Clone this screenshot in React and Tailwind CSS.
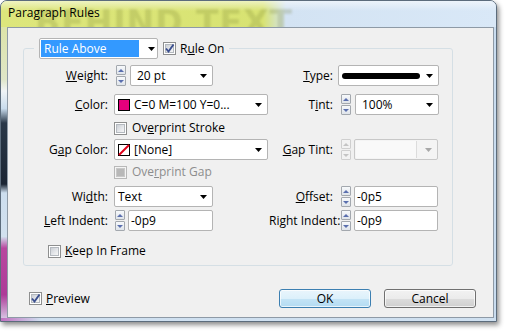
import React from "react";

function Arrow({ disabled }) {
  return (
    <svg width="7" height="4" viewBox="0 0 7 4" className="shrink-0">
      <polygon points="0,0 7,0 3.5,4" fill={disabled ? "#a8a8a8" : "#000"} />
    </svg>
  );
}

function Check({ checked, disabled }) {
  return (
    <div
      className={`flex h-[13px] w-[13px] shrink-0 items-center justify-center border ${
        disabled ? "border-[#b8b8b8] bg-[#f4f4f4]" : "border-[#8e8f8f] bg-white"
      }`}
    >
      <div
        className={`relative h-[9px] w-[9px] border ${
          disabled
            ? "border-[#c8c8c8] bg-[#b8b8b8]"
            : "border-[#b4b9bf] bg-[linear-gradient(135deg,#cbcfd5_0%,#e6e8eb_60%,#f6f6f6_100%)]"
        }`}
      >
        {checked && (
          <svg width="11" height="11" viewBox="0 0 11 11" className="absolute -left-[2px] -top-[2px]">
            <path d="M2 5.5 L4.5 8.5 L9.5 1.5" fill="none" stroke="#3b4f8f" strokeWidth="1.9" />
          </svg>
        )}
      </div>
    </div>
  );
}

function Spinner({ disabled }) {
  const box = disabled
    ? "border-[#cfcfcf] bg-[#f2f2f2]"
    : "border-[#a3a8ae] bg-[linear-gradient(#f7f9fb,#dfe4ea)]";
  const fill = disabled ? "#c4c4c4" : "#5a6fae";
  return (
    <div className="flex h-[21px] w-[10px] shrink-0 flex-col justify-between">
      <div className={`flex h-[10px] items-center justify-center rounded-[1px] border ${box}`}>
        <svg width="6" height="3" viewBox="0 0 6 3">
          <polygon points="0,3 6,3 3,0" fill={fill} />
        </svg>
      </div>
      <div className={`flex h-[10px] items-center justify-center rounded-[1px] border ${box}`}>
        <svg width="6" height="3" viewBox="0 0 6 3">
          <polygon points="0,0 6,0 3,3" fill={fill} />
        </svg>
      </div>
    </div>
  );
}

function Drop({ className, children }) {
  return (
    <div
      className={`flex h-[21px] items-center rounded-[2px] border border-[#b4b4b4] bg-white pr-[5px] ${className}`}
    >
      <div className="flex min-w-0 flex-1 items-center whitespace-nowrap leading-[16px]">{children}</div>
      <Arrow />
    </div>
  );
}

function Field({ className, value }) {
  return (
    <div
      className={`flex h-[21px] items-center rounded-[2px] border border-[#b4b4b4] bg-white pl-[2px] leading-[16px] ${className}`}
    >
      {value}
    </div>
  );
}

function Label({ children, right }) {
  return (
    <div className={`text-right whitespace-nowrap leading-[16px] ${right ? "pr-[5px]" : "pr-[6px]"}`}>
      {children}
    </div>
  );
}

export default function App() {
  return (
    <div className="h-[331px] w-[506px] overflow-hidden bg-white font-['Open_Sans',sans-serif] text-[11px] leading-none text-black">
      <div className="flex h-[322px] w-[497px] flex-col overflow-hidden rounded-t-[7px] border border-[#5c6c7c] bg-[#cfe0f1] shadow-[2px_3px_5px_rgba(0,0,0,0.45)]">
        {/* title bar */}
        <div className="relative h-[26px] shrink-0 overflow-hidden bg-[linear-gradient(90deg,#dde67c_0,#d8e372_262px,#d3e3f3_285px,#d9e8f7_100%)]">
          <div className="absolute left-[34px] top-[4px] whitespace-nowrap font-['DejaVu_Sans',sans-serif] text-[33px] font-bold leading-[36px] tracking-[1px] text-[#6a7428] opacity-20 blur-[1px]">
            BEHIND TEXT
          </div>
          <div className="absolute inset-x-0 top-0 h-[10px] bg-[linear-gradient(rgba(255,255,255,0.55),rgba(255,255,255,0))]" />
          <div className="relative pl-[7px] pt-[4px] text-[12px] leading-[16px]">Paragraph Rules</div>
        </div>

        <div className="flex h-[291px] shrink-0">
          <div className="w-[6px] shrink-0 bg-[linear-gradient(180deg,#dde4a8_0%,#dfe6c8_18%,#f0f4f6_22%,#c9dced_28%,#2a3848_33%,#1c2634_54%,#cddeee_57%,#d2e1ef_72%,#b8479f_76%,#ad3b98_92%,#d6c2e2_100%)]" />

          {/* client */}
          <div className="flex w-[487px] shrink-0 flex-col border border-[#8e9aa6] bg-[#f0f0f0] pl-[15px] pt-[10px]">
            <fieldset className="w-[430px] rounded-[3px] border border-[#d5dfe5] pb-[6px]">
              <legend className="ml-[10px] px-[5px]">
                <div className="flex h-[21px] items-center">
                  <div className="flex h-[21px] w-[119px] items-center rounded-[2px] border border-[#b4b4b4] bg-white pl-[1px] pr-[2px]">
                    <div className="flex h-[17px] w-[98px] items-center bg-[#3399ff] pl-[3px] text-[12px] leading-[16px] text-white">
                      Rule Above
                    </div>
                    <div className="ml-auto">
                      <Arrow />
                    </div>
                  </div>
                  <div className="ml-[5px]">
                    <Check checked />
                  </div>
                  <div className="ml-[4px] text-[12px] leading-[16px]">
                    R<u>u</u>le On
                  </div>
                </div>
              </legend>

              <div className="text-[12px]">
                {/* Weight / Type */}
                <div className="mt-[6px] grid h-[21px] grid-cols-[90px_155px_69px_101px] items-center">
                  <Label>
                    <u>W</u>eight:
                  </Label>
                  <div className="flex items-center pl-[2px]">
                    <Spinner />
                    <Drop className="ml-[4px] w-[83px] pl-[6px]">20 pt</Drop>
                  </div>
                  <Label right>
                    <u>T</u>ype:
                  </Label>
                  <Drop className="w-[101px] pl-[3px]">
                    <div className="h-[6px] w-[78px] rounded-full bg-black" />
                  </Drop>
                </div>

                {/* Color / Tint */}
                <div className="mt-[8px] grid h-[21px] grid-cols-[90px_155px_69px_101px] items-center">
                  <Label>
                    <u>C</u>olor:
                  </Label>
                  <Drop className="w-[154px] pl-[3px]">
                    <div className="mr-[4px] h-[12px] w-[12px] shrink-0 border border-black bg-[#e4007c]" />
                    C=0 M=100 Y=0...
                  </Drop>
                  <Label right>
                    T<u>i</u>nt:
                  </Label>
                  <div className="flex items-center pl-[3px]">
                    <Spinner />
                    <Drop className="ml-[4px] w-[84px] pl-[6px]">100%</Drop>
                  </div>
                </div>

                {/* Overprint Stroke */}
                <div className="mt-[5px] flex h-[16px] items-center pl-[90px] leading-[16px]">
                  <Check />
                  <span className="ml-[5px]">
                    Ov<u>e</u>rprint Stroke
                  </span>
                </div>

                {/* Gap Color / Gap Tint */}
                <div className="mt-[3px] grid h-[21px] grid-cols-[90px_155px_69px_101px] items-center">
                  <Label>
                    G<u>a</u>p Color:
                  </Label>
                  <Drop className="w-[154px] pl-[3px]">
                    <svg width="12" height="12" viewBox="0 0 12 12" className="mr-[4px] shrink-0">
                      <rect x="0.5" y="0.5" width="11" height="11" fill="#fff" stroke="#000" />
                      <line x1="1" y1="11" x2="11" y2="1" stroke="#e0001a" strokeWidth="2" />
                    </svg>
                    [None]
                  </Drop>
                  <Label right>
                    <u>G</u>ap Tint:
                  </Label>
                  <div className="flex items-center pl-[3px]">
                    <Spinner disabled />
                    <div className="ml-[3px] flex h-[21px] w-[84px] items-center rounded-[2px] border border-[#c8c8c8] bg-[#f4f4f4] pr-[5px]">
                      <div className="ml-[1px] h-[17px] w-[61px] border-r border-[#dcdcdc] bg-[#f9f9f9]" />
                      <div className="ml-auto">
                        <Arrow disabled />
                      </div>
                    </div>
                  </div>
                </div>

                {/* Overprint Gap */}
                <div className="mt-[4px] flex h-[16px] items-center pl-[90px] leading-[16px] text-[#8d8d8d]">
                  <Check disabled />
                  <span className="ml-[5px]">
                    Ove<u>r</u>print Gap
                  </span>
                </div>

                {/* Width / Offset */}
                <div className="mt-[6px] grid h-[21px] grid-cols-[90px_155px_69px_101px] items-center">
                  <Label>
                    Wi<u>d</u>th:
                  </Label>
                  <Drop className="w-[99px] pl-[3px]">Text</Drop>
                  <Label right>
                    <u>O</u>ffset:
                  </Label>
                  <div className="flex items-center pl-[3px]">
                    <Spinner />
                    <Field className="ml-[3px] w-[84px]" value="-0p5" />
                  </div>
                </div>

                {/* Left / Right Indent */}
                <div className="mt-[3px] grid h-[21px] grid-cols-[90px_155px_69px_101px] items-center">
                  <Label>
                    <u>L</u>eft Indent:
                  </Label>
                  <div className="flex items-center pl-[1px]">
                    <Spinner />
                    <Field className="ml-[3px] w-[85px]" value="-0p9" />
                  </div>
                  <Label right>
                    Ri<u>g</u>ht Indent:
                  </Label>
                  <div className="flex items-center pl-[3px]">
                    <Spinner />
                    <Field className="ml-[3px] w-[84px]" value="-0p9" />
                  </div>
                </div>

                {/* Keep In Frame */}
                <div className="mt-[12px] flex h-[16px] items-center pl-[24px] leading-[16px]">
                  <Check />
                  <span className="ml-[4px]">
                    <u>K</u>eep In Frame
                  </span>
                </div>
              </div>
            </fieldset>

            {/* bottom row */}
            <div className="mt-[23px] flex h-[19px] items-center pr-[17px] text-[12px] leading-[16px]">
              <div className="ml-[6px] flex items-center">
                <Check checked />
                <span className="ml-[4px]">
                  <u>P</u>review
                </span>
              </div>
              <button className="ml-auto flex h-[19px] w-[92px] items-center justify-center rounded-[3px] border border-[#3c7fb1] bg-[linear-gradient(#e9f5fc_0%,#dcf0fb_50%,#c4e4f6_50%,#b3dbf2_100%)] shadow-[inset_0_0_0_1px_rgba(255,255,255,0.7)]">
                OK
              </button>
              <button className="ml-[13px] flex h-[19px] w-[92px] items-center justify-center rounded-[3px] border border-[#707070] bg-[linear-gradient(#f2f2f2_0%,#ebebeb_50%,#dddddd_50%,#cfcfcf_100%)] shadow-[inset_0_0_0_1px_rgba(255,255,255,0.7)]">
                Cancel
              </button>
            </div>
          </div>

          <div className="w-[2px] shrink-0 bg-[#c9dcef]" />
        </div>

        <div className="h-[3px] shrink-0 bg-[linear-gradient(90deg,#c070c0_0,#cfe0f0_40px,#cfe0f0_100%)]" />
      </div>
    </div>
  );
}
